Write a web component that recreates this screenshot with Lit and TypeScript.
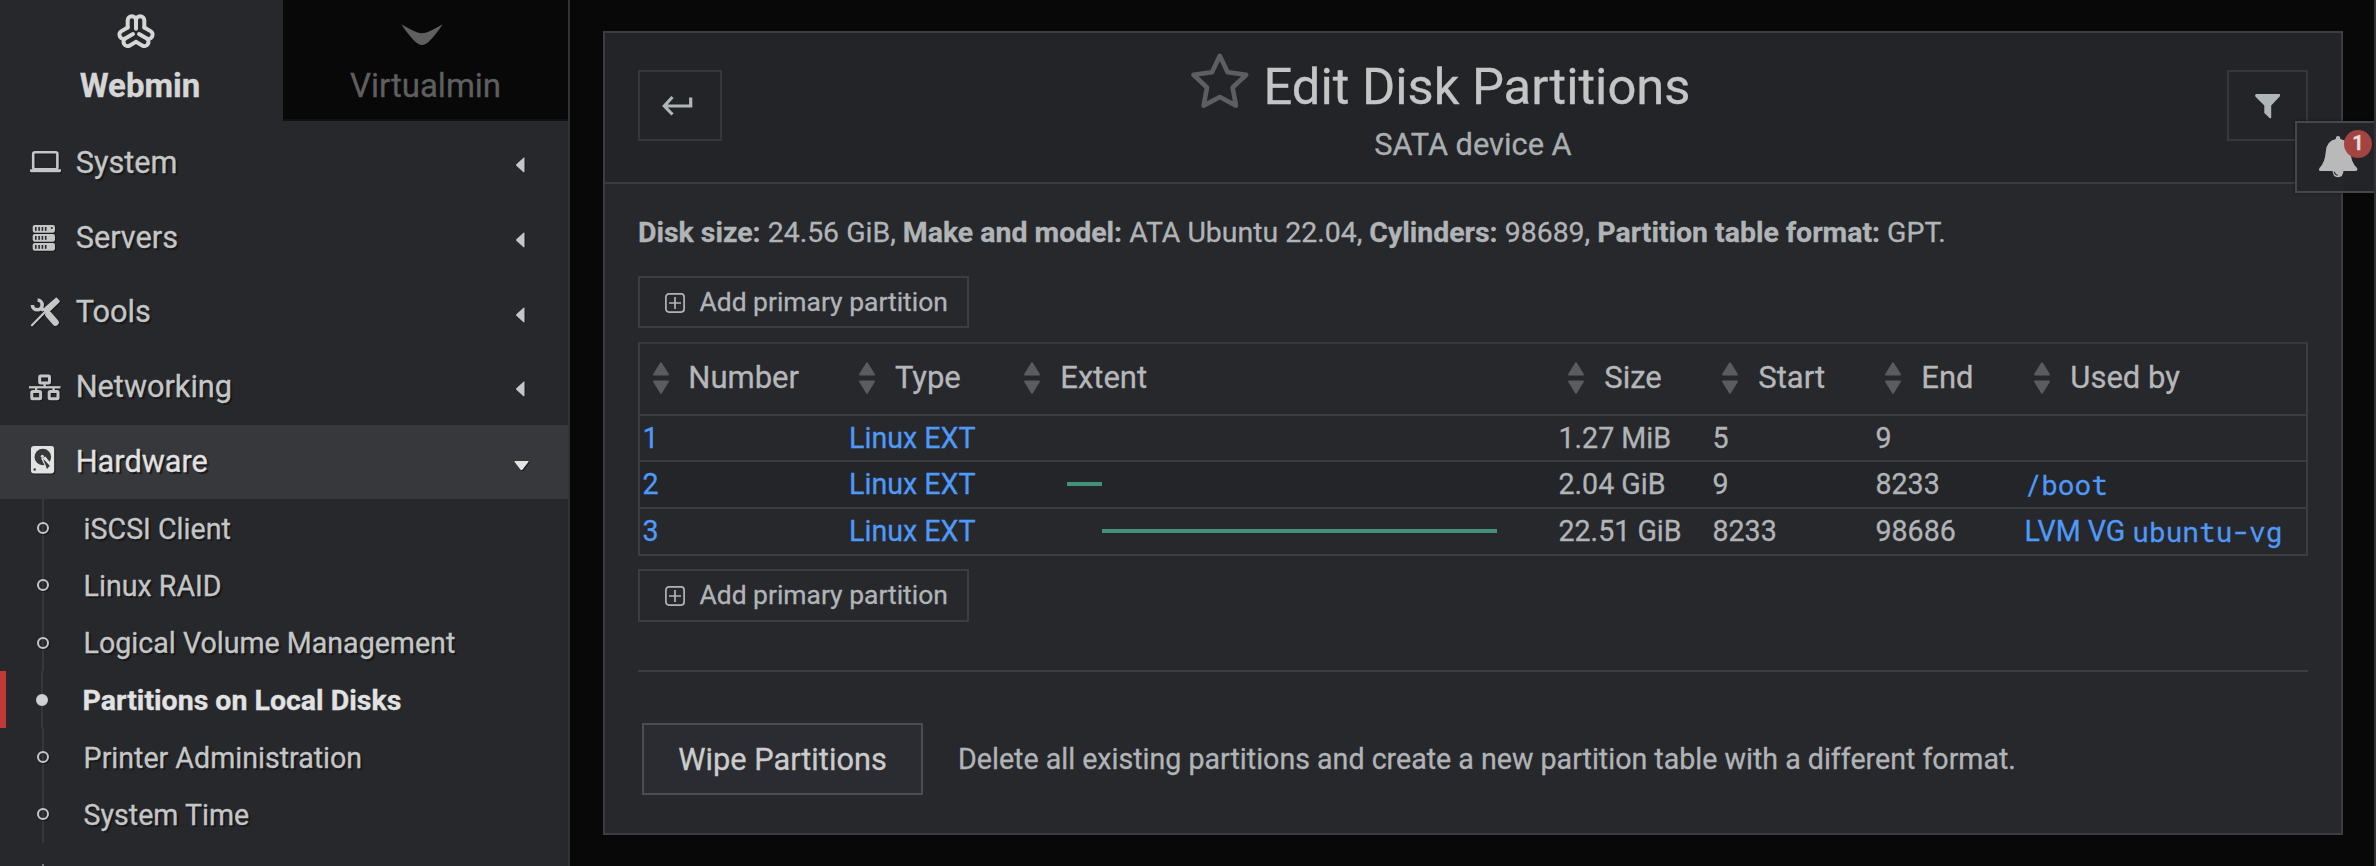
import { LitElement, html, css, svg, nothing } from "lit";
import { classMap } from "lit/directives/class-map.js";

const icons = {
  laptop: svg`<rect x="5.2" y="8.3" width="24.2" height="17" rx="2" fill="none" stroke="currentColor" stroke-width="2.6"/><path d="M2 25.2h31v1.6q0 1.5-1.5 1.5h-28q-1.5 0-1.5-1.5z" fill="currentColor"/>`,
  servers: svg`${[6, 15, 24].map(
    (y) => svg`<rect x="4.7" y=${y} width="22.3" height="7.8" rx="2.2" fill="currentColor"/>${[7, 10.3, 13.6, 16.9].map(
      (x) => svg`<rect x=${x} y=${y + 2} width="1.6" height="3.8" fill="#27282c"/>`
    )}`
  )}<circle cx="23.8" cy="9" r="1" fill="#27282c"/>`,
  tools: svg`<g fill="none" stroke="currentColor"><path d="M20.5 20.5l7 8" stroke-width="6.6" stroke-linecap="round"/><path d="M9.6 6a4.9 4.9 0 1 1-5.2 5" stroke-width="3.6"/><path d="M12.5 13.5l3 3" stroke-width="3.5"/><path d="M17 18L4 31.3" stroke-width="2.2" stroke-linecap="round"/></g><path d="M27.2 4.2q1.2-1.2 2.2 0l2 2.2q.8 1-.2 2l-12.4 12-4.6-4.8z" fill="currentColor"/>`,
  network: svg`<g fill="none" stroke="currentColor" stroke-width="3"><rect x="11.7" y="7.9" width="9.8" height="7.2" rx="1"/><rect x="3.8" y="23.5" width="8.8" height="7.2" rx="1"/><rect x="21.2" y="23.5" width="8.8" height="7.2" rx="1"/><path d="M1 19.3h31.5" stroke-width="2.3"/><path d="M16.6 16v3M8.2 19v4M25.6 19v4" stroke-width="2.4"/></g>`,
  disk: svg`<rect x="3" y="3" width="23.2" height="27.4" rx="3" fill="currentColor"/><circle cx="14.8" cy="14" r="8.3" fill="#37383b"/><path d="M13.2 15.500L19.500 28L25.500 24L17.500 13.500z" fill="currentColor"/><path d="M15 15.500L21.800 22.800L19 26z" fill="#37383b"/><circle cx="14.3" cy="13.3" r="1.5" fill="currentColor"/><circle cx="6.7" cy="26.5" r="1.2" fill="#37383b"/>`,
};

const petal = "M-8.3 -4.8V-12a4.15 4.15 0 0 1 8.3 0a4.15 4.15 0 0 1 8.3 0V-4.8M0 -12V-3.5";

const modules: { name: string; icon: keyof typeof icons; open?: boolean }[] = [
  { name: "System", icon: "laptop" },
  { name: "Servers", icon: "servers" },
  { name: "Tools", icon: "tools" },
  { name: "Networking", icon: "network" },
  { name: "Hardware", icon: "disk", open: true },
];

const pages = ["iSCSI Client", "Linux RAID", "Logical Volume Management", "Partitions on Local Disks", "Printer Administration", "System Time"];
const currentPage = "Partitions on Local Disks";

const columns = ["Number", "Type", "Extent", "Size", "Start", "End", "Used by"];

interface Partition {
  number: number;
  size: string;
  start: number;
  end: number;
  extent?: [number, number];
  usedPrefix?: string;
  used?: string;
}

const partitions: Partition[] = [
  { number: 1, size: "1.27 MiB", start: 5, end: 9 },
  { number: 2, size: "2.04 GiB", start: 9, end: 8233, extent: [53, 35], used: "/boot" },
  { number: 3, size: "22.51 GiB", start: 8233, end: 98686, extent: [88, 395], usedPrefix: "LVM VG ", used: "ubuntu-vg" },
];

class SideMenu extends LitElement {
  static styles = css`
    :host { display: block; box-sizing: border-box; width: 570px; height: 866px; overflow: hidden; background: #27282c; border-right: 2px solid #313236; color: #c5c6c6; }
    * { box-sizing: border-box; }
    svg { display: block; flex: none; }
    .tabs { display: grid; grid-template-columns: 283px 1fr; height: 121px; }
    .tab { display: flex; flex-direction: column; align-items: center; padding: 12px 3px 0 0; font-size: 33px; line-height: 40px; color: #d6d6d6; font-weight: 700; }
    .tab.off { padding-right: 0; background: #080808; color: #5f5f60; font-weight: 400; border-bottom: 2px solid #111112; }
    .tab svg { margin: 0 8px 14px 0; }
    .menu { padding-top: 5px; }
    .item { display: flex; align-items: center; height: 74.7px; padding: 0 0 2px 28px; font-size: 30.7px; text-shadow: 2px 2px 1px #17181a; }
    .item svg { filter: drop-shadow(1px 1px 0.5px #17181a); }
    .item.open { background: #37383b; color: #e2e2e2; }
    .label { flex: 1; padding-left: 11.7px; }
    .caret { margin: 6px 39px 0 0; }
    .item.open .caret { margin-top: 9px; }
    .sub { display: flex; align-items: center; height: 57.25px; font-size: 28.6px; text-shadow: 2px 2px 1px #17181a; border-left: 6px solid transparent; padding-left: 30px; }
    .rail { display: flex; flex: none; width: 14px; height: 100%; align-items: center; justify-content: center; background: linear-gradient(#36373b, #36373b) center / 2px 100% no-repeat; }
    .dot { width: 12px; height: 12px; border: 2px solid #c5c6c6; border-radius: 50%; box-shadow: 1px 1px 1px #17181a; }
    .sub.on { border-left-color: #bf3a34; padding-left: 29px; font-weight: 700; color: #e2e2e2; font-size: 28.5px; text-shadow: none; }
    .on .dot { background: #d0d0d0; border-color: #d0d0d0; box-shadow: none; }
    .sub-label { padding: 1px 0 0 33.6px; }
    .next { width: 2px; height: 2px; margin: 21.5px 0 0 42px; background: #77787a; }
  `;

  render() {
    return html`
      <div class="tabs">
        <div class="tab">
          <svg width="40" height="40" viewBox="-20 -20.3 40 40" fill="none" stroke="currentColor" stroke-width="4" stroke-linecap="round" stroke-linejoin="round">
            <path d=${petal}/><path d=${petal} transform="rotate(120)"/><path d=${petal} transform="rotate(240)"/>
          </svg>
          <span>Webmin</span>
        </div>
        <div class="tab off">
          <svg width="42" height="40" viewBox="0 12 42 40"><path d="M.4 24.2Q11 30.5 16.5 32.5Q21 34 25.5 32.5Q31 30.5 41.6 24.2Q37 32 28.5 41Q24.5 44.9 21 44.9Q17.5 44.9 13.5 41Q5 32 .4 24.2z" fill="currentColor"/></svg>
          <span>Virtualmin</span>
        </div>
      </div>
      <nav class="menu">
        ${modules.map((m) => html`
          <div class=${classMap({ item: true, open: !!m.open })}>
            <svg width="36" height="36" viewBox="0 0 36 36">${icons[m.icon]}</svg>
            <span class="label">${m.name}</span>
            <svg class="caret" width="15" height="16" viewBox="0 0 15 16" fill="currentColor">
              ${m.open ? svg`<path d="M1 3h13q1 0 .4 1L8.6 11.4q-1.1 1.2-2.2 0L.6 4Q0 3 1 3z"/>` : svg`<path d="M10.5 1.2v13.6q0 1-1 .4L2.6 9q-1.2-1 0-2L9.5.8q1-.6 1 .4z"/>`}
            </svg>
          </div>`)}
        ${pages.map((p) => html`
          <div class=${classMap({ sub: true, on: p === currentPage })}>
            <span class="rail"><span class="dot"></span></span>
            <span class="sub-label">${p}</span>
          </div>`)}
        <div class="next"></div>
      </nav>`;
  }
}
customElements.define("side-menu", SideMenu);

class AddButton extends LitElement {
  static styles = css`
    :host { display: flex; box-sizing: border-box; align-items: center; width: 331px; height: 52px; padding: 0 0 2px 25px; border: 2px solid #3c3d41; font-size: 26.45px; color: #b1b4b7; }
    svg { flex: none; margin: 3px 14.5px 0 0; }
  `;
  render() {
    return html`<svg width="20" height="20" viewBox="0 0 20 20" fill="none" stroke="currentColor" stroke-width="1.7"><rect x=".9" y=".9" width="18.2" height="18.2" rx="3"/><path d="M10 4v12M4 10h12"/></svg>Add primary partition`;
  }
}
customElements.define("add-button", AddButton);

class PartitionTable extends LitElement {
  static styles = css`
    :host { display: block; border: 2px solid #3c3d41; border-top-color: #38393d; }
    .row { display: grid; grid-template-columns: 208.6px 165.4px 544px 154px 163px 149px 1fr; align-items: center; box-sizing: border-box; height: 47px; border-top: 2px solid #3c3d41; padding-bottom: 1px; font-size: 28.6px; color: #b1b4b7; white-space: pre; }
    .row.alt { background: #242529; }
    .row.head { height: 70px; border: 0; padding-bottom: 4px; font-size: 31px; color: #b6b7b9; }
    .row.head + .row { height: 46px; }
    .cell { display: flex; align-items: center; padding-left: 2.5px; }
    .row > .cell ~ .cell { padding-left: 0.5px; }
    .head svg { flex: none; margin: 1px 19.8px 0 10px; }
    .link { color: #4f99f9; }
    .mono { font: 27.8px "Roboto Mono", "DejaVu Sans Mono", monospace; }
    .bar { height: 4px; background: #43907b; }
  `;
  render() {
    return html`
      <div class="row head">
        ${columns.map((c) => html`<span class="cell"><svg width="16" height="32" viewBox="0 0 16 32" fill="#5b5c60"><path d="M7.2.8q.8-1 1.6 0L15.8 12q.5 1.5-.8 1.5H1Q-.3 13.5.2 12zM7.2 31.2q.8 1 1.6 0L15.8 20q.5-1.5-.8-1.5H1Q-.3 18.5.2 20z"/></svg>${c}</span>`)}
      </div>
      ${partitions.map((p, i) => html`
        <div class=${classMap({ row: true, alt: i % 2 === 1 })}>
          <span class="cell link">${p.number}</span>
          <span class="cell link">Linux EXT</span>
          <span class="cell">${p.extent ? html`<span class="bar" style="margin-left:${p.extent[0]}px;width:${p.extent[1]}px"></span>` : nothing}</span>
          <span class="cell">${p.size}</span>
          <span class="cell">${p.start}</span>
          <span class="cell">${p.end}</span>
          <span class="cell link">${p.usedPrefix ?? nothing}${p.used ? html`<span class="mono">${p.used}</span>` : nothing}</span>
        </div>`)}`;
  }
}
customElements.define("partition-table", PartitionTable);

class AppRoot extends LitElement {
  static styles = css`
    :host { display: flex; box-sizing: border-box; position: relative; width: 2376px; height: 866px; overflow: hidden; background: #080808; border-right: 2px solid #323336; font-family: Roboto, sans-serif; color: #b1b4b7; -webkit-text-stroke: 0.3px currentColor; }
    * { box-sizing: border-box; }
    side-menu { flex: none; }
    svg { display: block; }
    .panel { flex: none; width: 1740px; height: 804px; margin: 31px 0 0 33px; border: 2px solid #3c3d41; background: #27282c; }
    .head { display: grid; grid-template-columns: 84px 1fr 84px; align-items: start; height: 151px; padding: 0 33px; background: #232428; border-bottom: 2px solid #3a3b3f; }
    .square { display: flex; align-items: center; justify-content: center; width: 84px; height: 71px; margin-top: 37px; border: 2px solid #36373b; color: #b0b5b8; }
    .square.back { padding-right: 6px; }
    .square.right { width: 81px; justify-self: end; }
    .center { display: flex; flex-direction: column; align-items: center; padding-top: 23px; }
    .title { display: flex; align-items: center; height: 60px; padding-right: 66px; font-size: 50.7px; color: #c4c5c5; }
    .title svg { margin: 0 14px 9px 0; }
    .subtitle { padding-top: 9px; font-size: 30.8px; line-height: 40px; color: #a9aeb0; }
    .body { display: flex; flex-direction: column; padding: 33px 33px 0; }
    .info { height: 32px; font-size: 28.45px; line-height: 32px; margin-bottom: 27px; }
    partition-table { margin: 14px 0 13px; }
    .second { height: 53px; padding-bottom: 3px; }
    .line { height: 2px; margin: 48px 0 51px; background: #3c3d41; }
    .wipe { display: flex; align-items: center; padding-left: 4px; }
    .button { display: flex; align-items: center; justify-content: center; width: 281px; height: 72px; border: 2px solid #4c4d51; background: #2b2c31; font-size: 30.75px; color: #cccccc; }
    .desc { padding-left: 35px; font-size: 28.6px; }
    .notice { position: absolute; left: 2295px; top: 121px; width: 81px; height: 72px; padding: 13px 0 0 22px; border: 2px solid #46474b; border-right: 0; background: rgba(36, 37, 41, 0.97); box-shadow: 0 0 3px rgba(0, 0, 0, 0.5); }
    .badge { position: absolute; right: 4px; top: 7px; width: 28px; height: 28px; border-radius: 50%; background: #a34440; color: #e4dede; font-size: 20px; font-weight: 700; line-height: 27px; text-align: center; }
  `;
  render() {
    return html`
      <side-menu></side-menu>
      <main class="panel">
        <header class="head">
          <div class="square back"><svg width="32" height="22" viewBox="661 94 32 22" fill="none" stroke="currentColor" stroke-width="3.2"><path d="M690.7 96.5V105H664.5M672.5 96L664.3 105l8.2 8.5"/></svg></div>
          <div class="center">
            <div class="title">
              <svg width="60" height="60" viewBox="1189 52 60 60" fill="none" stroke="#5d5e61" stroke-width="4.6" stroke-linejoin="round"><path d="M1218.8 55.8L1226.6 72.2 1245.2 74.8 1231.6 87.5 1235 105.6 1218.8 97 1202.6 105.6 1206 87.5 1192.4 74.8 1211 72.2z"/></svg>
              <span>Edit Disk Partitions</span>
            </div>
            <div class="subtitle">SATA device A</div>
          </div>
          <div class="square right"><svg width="26" height="26" viewBox="2255 93 26 26" fill="currentColor"><path d="M2256 94h23.5q1.2 1.2 0 2.8L2271.2 105.5V118q-1 .5-1.7 0L2264.3 113V105.5L2255.5 96.8q-1-1.6.5-2.8z"/></svg></div>
        </header>
        <section class="body">
          <div class="info"><b>Disk size:</b> 24.56 GiB, <b>Make and model:</b> ATA Ubuntu 22.04, <b>Cylinders:</b> 98689, <b>Partition table format:</b> GPT.</div>
          <add-button></add-button>
          <partition-table></partition-table>
          <add-button class="second"></add-button>
          <div class="line"></div>
          <div class="wipe"><span class="button">Wipe Partitions</span><span class="desc">Delete all existing partitions and create a new partition table with a different format.</span></div>
        </section>
      </main>
      <aside class="notice">
        <svg width="40" height="42" viewBox="0 0 40 42"><path d="M19 0q2.3 0 2.3 3Q31 5 31.5 15.5Q32 26.5 38 32q1.3 2.8-1.5 3H1.5Q-1 34.8.5 32Q6 26.500 6.8 15.5Q7.5 5 16.8 3Q16.8 0 19 0zM13.500 34.5h11q-.3 6.8-5.5 6.800t-5.500-6.800z" fill="#b9b9b9"/><path d="M15.3 35.8q.4 3 3.4 3.500" fill="none" stroke="#242529" stroke-width="1.1"/></svg>
        <span class="badge">1</span>
      </aside>`;
  }
}
customElements.define("app-root", AppRoot);
